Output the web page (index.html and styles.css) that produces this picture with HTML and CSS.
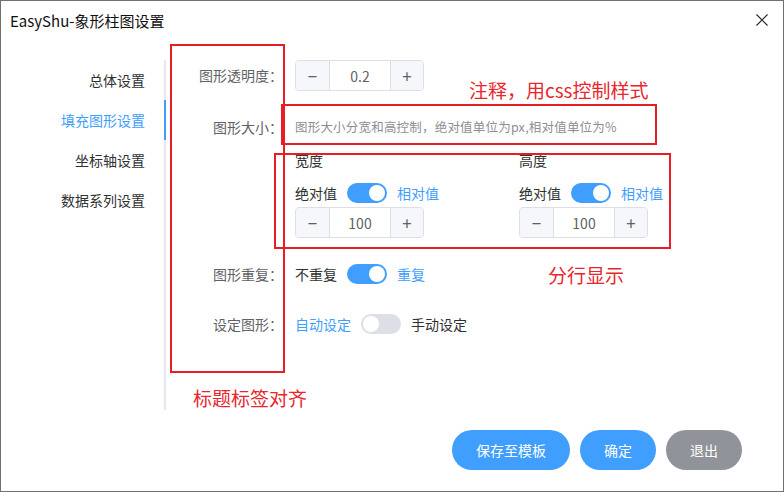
FILE: index.html
```html
<!DOCTYPE html>
<html lang="zh">
<head>
<meta charset="utf-8">
<title>EasyShu-象形柱图设置</title>
<link rel="stylesheet" href="styles.css">
</head>
<body>
<div class="window">
  <div class="titlebar">
    <span class="title">EasyShu-象形柱图设置</span>
    <svg class="close" width="12" height="12" viewBox="0 0 12 12"><path d="M0.5 0.5 L11.5 11.5 M11.5 0.5 L0.5 11.5" stroke="#222" stroke-width="1.1" fill="none"/></svg>
  </div>
  <div class="content">
    <nav class="menu">
      <div class="menu-item">总体设置</div>
      <div class="menu-item active">填充图形设置</div>
      <div class="menu-item">坐标轴设置</div>
      <div class="menu-item">数据系列设置</div>
    </nav>
    <div class="form">
      <div class="row row-opacity">
        <div class="label">图形透明度：</div>
        <div class="field">
          <div class="num"><span class="btn">−</span><span class="val">0.2</span><span class="btn">+</span></div>
        </div>
      </div>
      <div class="row row-size">
        <div class="label">图形大小：</div>
        <div class="field">
          <div class="hint">图形大小分宽和高控制，绝对值单位为px,相对值单位为%</div>
          <div class="sizes">
            <div class="size-col">
              <div class="sub-title">宽度</div>
              <div class="toggle-line"><span>绝对值</span><span class="switch on"></span><span class="blue">相对值</span></div>
              <div class="num"><span class="btn">−</span><span class="val">100</span><span class="btn">+</span></div>
            </div>
            <div class="size-col">
              <div class="sub-title">高度</div>
              <div class="toggle-line"><span>绝对值</span><span class="switch on"></span><span class="blue">相对值</span></div>
              <div class="num"><span class="btn">−</span><span class="val">100</span><span class="btn">+</span></div>
            </div>
          </div>
        </div>
      </div>
      <div class="row row-repeat">
        <div class="label">图形重复：</div>
        <div class="field toggle-line"><span>不重复</span><span class="switch on"></span><span class="blue">重复</span></div>
      </div>
      <div class="row row-shape">
        <div class="label">设定图形：</div>
        <div class="field toggle-line"><span class="blue">自动设定</span><span class="switch"></span><span>手动设定</span></div>
      </div>
    </div>
  </div>
  <div class="footer">
    <button class="pill primary wide">保存至模板</button>
    <button class="pill primary">确定</button>
    <button class="pill gray">退出</button>
  </div>

  <div class="mark box1"></div>
  <div class="mark box2"></div>
  <div class="mark box3"></div>
  <div class="note note1">注释，用css控制样式</div>
  <div class="note note2">分行显示</div>
  <div class="note note3">标题标签对齐</div>
</div>
</body>
</html>
```

FILE: styles.css
```css
* { box-sizing: border-box; }
html, body { margin: 0; padding: 0; background: #fff; }
body {
  font-family: "Noto Sans CJK SC", "Microsoft YaHei", "Noto Sans", sans-serif;
  color: #303133;
  font-size: 14px;
}
.window {
  position: relative;
  width: 784px;
  height: 492px;
  border: 1px solid #707070;
  display: flex;
  flex-direction: column;
  overflow: hidden;
}
.titlebar {
  height: 39px;
  display: flex;
  align-items: center;
  justify-content: space-between;
  padding: 0 15px 0 9px;
}
.title {
  font-size: 15px;
  color: #111;
  line-height: 20px;
}
.close { display: block; margin-top: -1px; }

.content {
  display: flex;
  padding-top: 20px;
  height: 370px;
}
.menu {
  width: 165px;
  height: 350px;
  border-right: 2px solid #e4e7ed;
}
.menu-item {
  height: 40px;
  line-height: 40px;
  text-align: right;
  padding-right: 19px;
  font-size: 14px;
  color: #303133;
  margin-right: -2px;
  border-right: 2px solid transparent;
}
.menu-item.active {
  color: #409eff;
  border-right-color: #409eff;
}

.form { flex: 1; }
.row { display: flex; align-items: flex-start; }
.label {
  width: 129px;
  padding-right: 12px;
  text-align: right;
  color: #606266;
  font-size: 14px;
  flex-shrink: 0;
}
.row-opacity .label { line-height: 31px; }
.row-size { margin-top: 20px; }
.row-size .label { line-height: 32px; }
.row-repeat { margin-top: 26px; }
.row-shape { margin-top: 30px; }
.row-repeat .label, .row-shape .label { line-height: 20px; }

.num {
  display: flex;
  width: 129px;
  height: 31px;
  border: 1px solid #dcdfe6;
  border-radius: 4px;
  overflow: hidden;
  font-size: 14px;
}
.num .btn {
  width: 34px;
  background: #f5f7fa;
  color: #606266;
  display: flex;
  align-items: center;
  justify-content: center;
  font-size: 17px;
  line-height: 1;
}
.num .btn:first-child { border-right: 1px solid #dcdfe6; }
.num .btn:last-child { border-left: 1px solid #dcdfe6; width: 33px; }
.num .val {
  flex: 1;
  display: flex;
  align-items: center;
  justify-content: center;
  color: #606266;
  font-size: 14px;
}

.hint {
  line-height: 32px;
  font-size: 12.5px;
  color: #8c8e93;
  letter-spacing: 0.2px;
  white-space: nowrap;
}
.sizes { display: flex; margin-top: 7px; }
.size-col { width: 224px; }
.sub-title { line-height: 20px; font-size: 14px; color: #303133; }
.size-col .toggle-line { margin-top: 13px; }
.size-col .num { margin-top: 4px; }

.toggle-line {
  display: flex;
  align-items: center;
  height: 20px;
  line-height: 20px;
  gap: 10px;
  font-size: 14px;
  color: #303133;
  white-space: nowrap;
}
.blue { color: #409eff; }
.switch {
  position: relative;
  width: 40px;
  height: 20px;
  border-radius: 10px;
  background: #dcdfe6;
  flex-shrink: 0;
}
.switch::after {
  content: "";
  position: absolute;
  top: 2px;
  left: 2px;
  width: 16px;
  height: 16px;
  border-radius: 50%;
  background: #fff;
}
.switch.on { background: #409eff; }
.switch.on::after { left: 22px; }

.footer {
  display: flex;
  justify-content: flex-end;
  gap: 10px;
  padding: 20px 41px 0 0;
}
.pill {
  height: 40px;
  border: none;
  border-radius: 20px;
  color: #fff;
  font-family: inherit;
  font-size: 14px;
  width: 76px;
  padding: 0;
}
.pill.wide { width: 118px; }
.primary { background: #409eff; }
.gray { background: #909399; }

.mark {
  position: absolute;
  border: 2px solid #e61f26;
}
.box1 { left: 169px; top: 43px; width: 115px; height: 329px; }
.box2 { left: 280px; top: 103px; width: 376px; height: 41px; }
.box3 { left: 273px; top: 152px; width: 397px; height: 96px; }
.note {
  position: absolute;
  color: #e8262d;
  font-size: 19px;
  line-height: 22px;
  white-space: nowrap;
}
.note1 { left: 468px; top: 78px; }
.note2 { left: 547px; top: 263px; }
.note3 { left: 192px; top: 386px; }
```
